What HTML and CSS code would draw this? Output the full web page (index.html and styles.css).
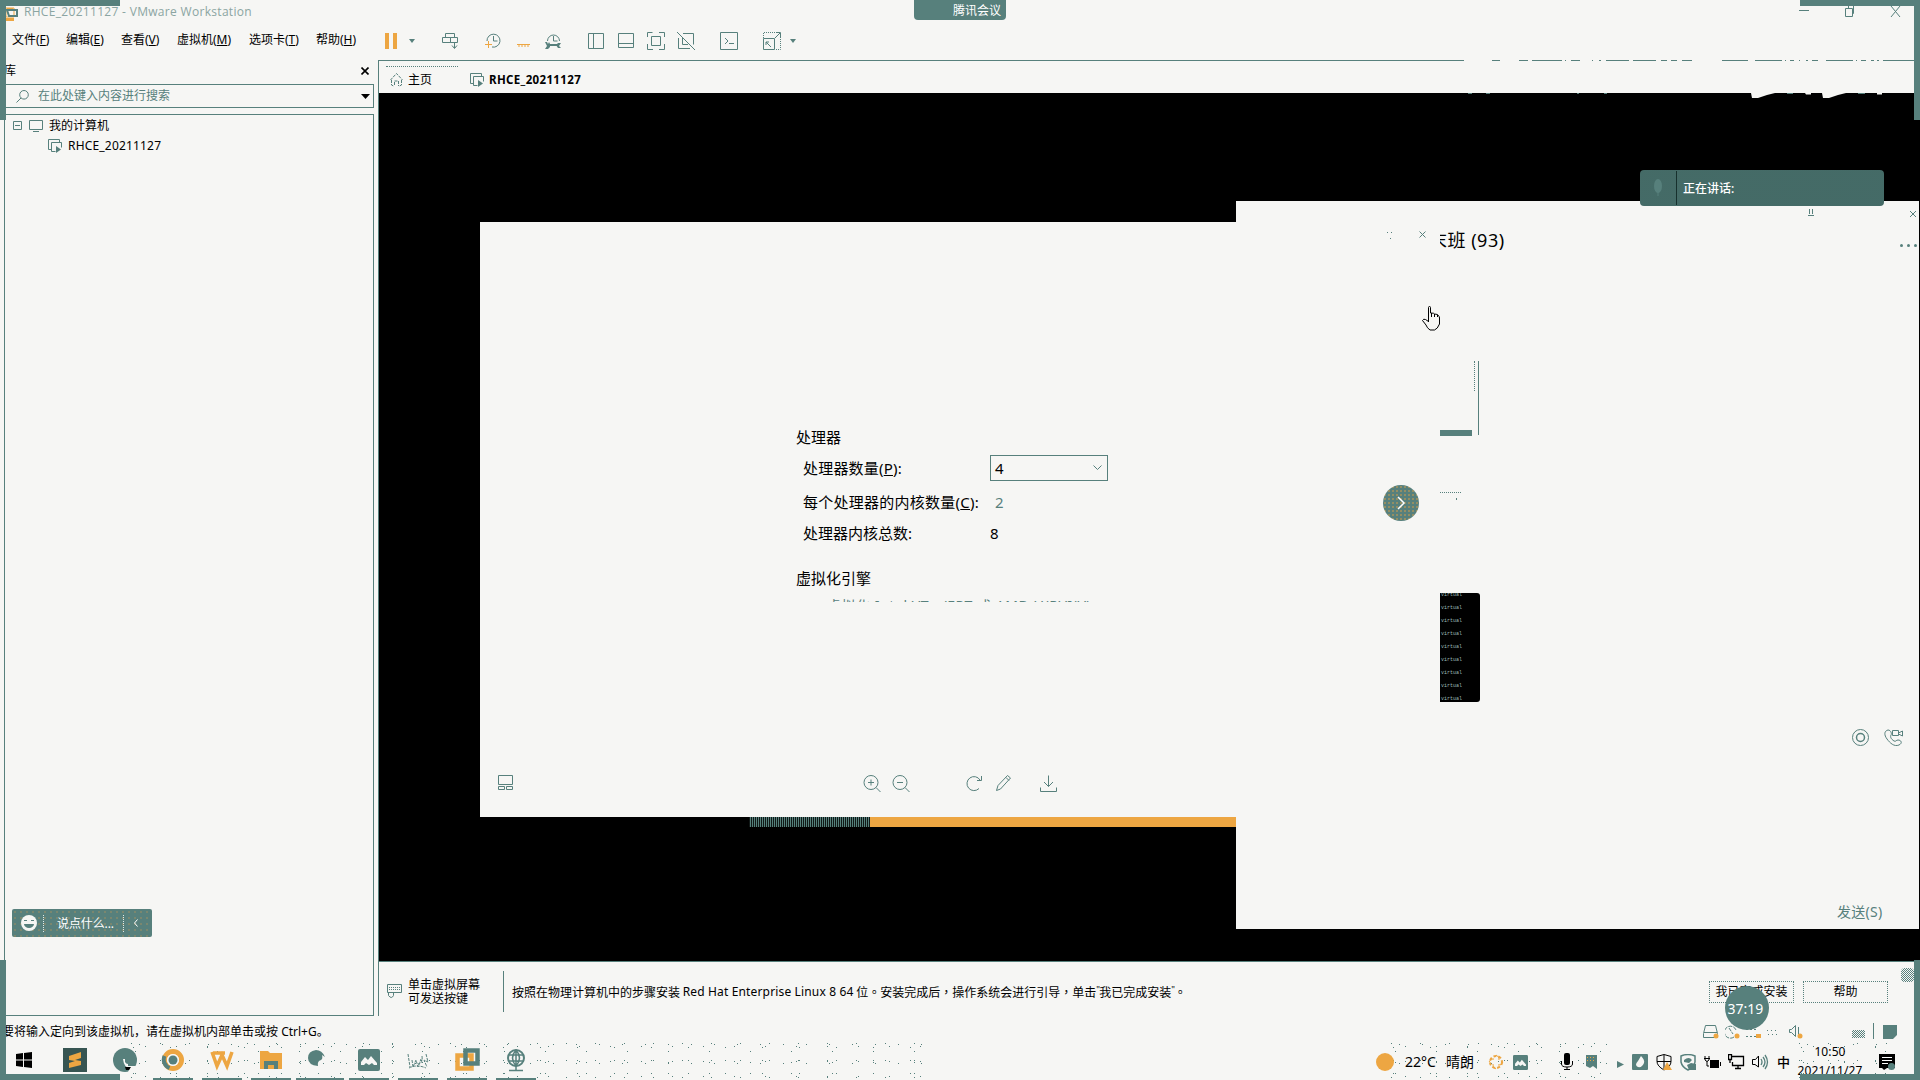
FILE: index.html
```html
<!DOCTYPE html>
<html lang="zh-CN">
<head>
<meta charset="utf-8">
<title>RHCE_20211127 - VMware Workstation</title>
<link rel="stylesheet" href="styles.css">
</head>
<body>
<svg width="0" height="0" class="defs">
  <defs>
    <symbol id="vm" viewBox="0 0 14 14"><path d="M3.500 10.500H.5V.5h11v3M3.500 3.500h10v5M3.500 3.500v9h4"/><path class="f" d="M8 7l5 3.500-5 3.500z"/></symbol>
    <symbol id="caret" viewBox="0 0 6 4"><path class="f" d="M0 0h6L3 4z"/></symbol>
    <symbol id="hill" viewBox="0 0 22 22"><rect class="f" width="22" height="22" rx="2"/><path class="p" d="M3 13l4-5 3 3 3-4 6 7v2h-3l-2-2-3 2-3-2-2 2H3z"/></symbol>
  </defs>
</svg>
<div class="desktop">
  <header class="titlebar">
    <svg class="logo" width="18" height="14" viewBox="0 0 18 14"><path class="o" d="M6 1h8v9H6z"/><path class="o f" d="M6 11h8v3H6zM7 1h6v2H7z"/><path d="M7 3h10v6H9z" stroke-width="2"/></svg>
    <span class="caption">RHCE_20211127 - VMware Workstation</span>
    <svg class="winbtns" width="104" height="16" viewBox="0 0 104 16"><path d="M0 6.500h10M46.500 4.500h7v8h-7zM49.500 4V1.500h5v8H54M92 2l9 11M101 2l-9 11"/></svg>
  </header>

  <div class="menubar">
    <nav class="menus"><span>文件(<u>F</u>)</span><span>编辑(<u>E</u>)</span><span>查看(<u>V</u>)</span><span>虚拟机(<u>M</u>)</span><span>选项卡(<u>T</u>)</span><span>帮助(<u>H</u>)</span></nav>
    <div class="toolbar">
      <svg width="12" height="18"><path class="o f" d="M0 1h4v16H0zM8 1h4v16H8z"/></svg>
      <svg width="6" height="4"><use href="#caret"/></svg>
      <svg width="17" height="18"><path d="M3.500 5.500v-4h9v4M.5 5.500h8v5h-8zM8.500 5.500h7v5h-7zM12.500 11v5M10 13.500l2.500 3 2.500-3"/></svg>
      <svg width="16" height="18"><path d="M2 9a6.500 6.500 0 1 1 5 6M8.500 4v5h4"/><path class="o" d="M0 12.500h7M3.500 9v7"/></svg>
      <svg width="14" height="18"><path class="o" d="M0 12.500h13"/><path class="o" d="M1 14h12" stroke-dasharray="2 1"/></svg>
      <svg width="17" height="18"><path d="M2.500 9a6 6 0 1 1 12 0M8.500 4v5h4"/><path d="M3 13h10" stroke-width="2"/><path class="f" d="M0 10h2l1 2 1-2 1 2v3l-2 2H0l2-3zM16 11h-3l-2 2 2 3h3l-2-2z"/></svg>
      <svg width="17" height="18"><path d="M.5 1.500h15v15H.5zM5.500 1.500v15"/></svg>
      <svg width="17" height="18"><path d="M.5 1.500h15v14H.5zM.5 11.500h15"/></svg>
      <svg width="18" height="18"><path d="M.5 5V.5h5M12 .5h5.500V5M17.500 12v5.500H12M6 17.500H.5V12M4.500 4.500h9v9h-9z"/></svg>
      <svg width="18" height="18"><path d="M0 0l18 18M6 1.500h10.500v11M1.500 6v10.500H13M5.500 6v6.500H11"/></svg>
      <svg width="18" height="18"><path d="M.5.5h17v17H.5zM5 6l3 3-3 3M9 11.500h5"/></svg>
      <svg width="18" height="18"><path stroke-dasharray="1 1" d="M.5 6V.5H17M17.500 1v16.500H12"/><path d="M.5 6.500h11v11H.5zM12 6l5-5M13 .5h4.500V5M3 10l5 5M3 13v-3h3"/></svg>
      <svg width="6" height="4"><use href="#caret"/></svg>
    </div>
  </div>

  <main class="workspace">
    <aside class="library">
      <div class="libhead"><span>库</span><svg width="8" height="8"><path class="k" d="M.5.5l7 7M7.500.5l-7 7" stroke-width="1.600"/></svg></div>
      <div class="search"><svg width="13" height="13"><circle cx="8" cy="4.800" r="4.300"/><path d="M5 8L.5 12.500"/></svg><span>在此处键入内容进行搜索</span><svg width="9" height="5"><path class="k f" d="M0 0h9L4.500 5z"/></svg></div>
      <div class="tree">
        <div class="node"><svg width="31" height="12"><path d="M1.500 1.500h8v8h-8zM3 5.500h5M17.500.5h13v9h-13zM21 11.500h6"/></svg><span>我的计算机</span></div>
        <div class="node child"><svg width="14" height="14"><use href="#vm"/></svg><span>RHCE_20211127</span></div>
        <div class="chat">
          <svg width="16" height="16"><circle class="p" cx="8" cy="8" r="8"/><path class="f" d="M3 9h10a5 4 0 0 1-10 0zM3 5h3v1H3zM10 5h3v1h-3z"/></svg>
          <span>说点什么...</span>
          <svg class="back" width="4" height="8"><path class="w" d="M3.500.5L.5 4l3 3.500"/></svg>
        </div>
      </div>
    </aside>

    <section class="console">
      <svg class="edge" width="1542" height="1"><path d="M0 .5H1085M1113 .5h8M1140 .5h9M1153 .5h30M1186 .5h1M1192 .5h9M1213 .5h1M1220 .5h2M1227 .5h23M1254 .5h23M1282 .5h6M1292 .5h6M1303 .5h10M1343 .5h26M1376 .5h27M1406 .5h1M1411 .5h4M1420 .5h1M1427 .5h2M1433 .5h6M1447 .5h27M1477 .5h1M1482 .5h5M1492 .5h3M1498 .5h2M1504 .5h32"/></svg>
      <div class="tabs">
        <div class="tab home"><svg width="13" height="14"><path stroke-dasharray="3 1" d="M.5 7L6.500.5 12.500 7M1.500 7v5l2 1M11.500 7v5l-2 1M4.500 12V8h4v5"/></svg><span>主页</span></div>
        <div class="tab vmtab"><svg width="14" height="14"><use href="#vm"/></svg><b>RHCE_20211127</b></div>
      </div>
      <div class="screen">
        <svg class="fragments" width="140" height="5"><path class="p" d="M21 0h24l-8 2-9 3h-6zM75 0h6v1.500h-5zM92 0h24l-8 2-9 3h-6zM147 0h5v1.500h-5z"/><path class="f" d="M57 0h6v1h-6zM128 0h7v1h-7zM-262 0h4v1h-4zM-244 0h4v1h-4zM-153 0h2v1h-2zM-126 0h3v1h-3z"/></svg>
        <div class="strip"></div>
        <div class="win group">
          <svg class="pin" width="6" height="8"><path d="M1.500 0v5M4.500 0v5M0 6.500h6"/></svg>
          <svg class="x2" width="6" height="6"><path d="M0 0l6 6M6 0L0 6"/></svg>
          <div class="more"><i></i><i></i><i></i></div>
          <div class="gtitle"><span>末班 (93)</span></div>
          <div class="scroll"></div><div class="bubble"></div><div class="dots"></div>
          <div class="term"><span>virtual</span><span>virtual</span><span>virtual</span><span>virtual</span><span>virtual</span><span>virtual</span><span>virtual</span><span>virtual</span><span>virtual</span></div>
          <svg class="calls" width="52" height="18"><circle cx="8.500" cy="8.500" r="8"/><circle cx="8.500" cy="8.500" r="4" stroke-width="1.500"/><path d="M36 1c-4 1-4 5-1 9s7 8 12 6c4-2 2-5-1-5-2 0-2 2-4 1-3-2-4-4-3-6 1-1 0-5-3-5zM40.500 1.500h6v5h-6zM46.500 4l4-2v5l-4-2"/></svg>
          <span class="send">发送(S)</span>
        </div>
        <div class="win viewer">
          <svg class="vx" width="7" height="7"><path d="M.5.5l6 6M6.500.5l-6 6"/></svg>
          <svg class="vmin" width="6" height="9"><path class="f" d="M0 0h1v1H0zM4 0h1v1H4zM3 6h1v1H3z"/></svg>
          <div class="cpu">
            <h3>处理器</h3>
            <div class="row r1"><label>处理器数量(<u>P</u>):</label><div class="select"><span>4</span><svg width="9" height="6"><path d="M.5.5l4 4 4-4"/></svg></div></div>
            <div class="row r2"><label>每个处理器的内核数量(<u>C</u>):</label><span class="off">2</span></div>
            <div class="row r3"><label>处理器内核总数:</label><span>8</span></div>
            <h3 class="engine">虚拟化引擎</h3>
            <div class="cut">虚拟化 Intel VT-x/EPT 或 AMD-V/RVI(V)</div>
          </div>
          <div class="vtools">
            <svg width="16" height="16"><path d="M.5.5h14v9H.5zM.5 11.500h6v3h-6zM8.500 11.500h6v3h-6z"/></svg>
            <svg width="18" height="18"><circle cx="8" cy="7.500" r="7"/><path d="M5 7.500h6M8 4.500v6M13 12.500l4.500 4.500"/></svg>
            <svg width="18" height="18"><circle cx="8" cy="7.500" r="7"/><path d="M5 7.500h6M13 12.500l4.500 4.500"/></svg>
            <svg width="17" height="17"><path d="M13 13.500A7 7 0 1 1 14 5M15.500 1v4.500H11"/></svg>
            <svg width="16" height="17"><path d="M.5 15.500l1.500-5L11.500.5l3 2.500-10 11zM10 2.500l3 3"/></svg>
            <svg width="18" height="18"><path d="M8.500.5v11M4 7l4.500 4.500L13 7M.5 12.500v4h16v-4"/></svg>
          </div>
          <svg class="hand" width="18" height="25"><path class="k" d="M6.500 16V1.500q0-1 1-1t1 1V7q4 0 4 1 4 0 4 2 1 0 1 2v6q-2 5-5 6H8q-3-2-4-5L.5 14.500q1-2 3-1l3 2M9.500 7v4M12.500 8v3M15.500 9v2"/></svg>
        </div>
        <div class="next"><svg width="9" height="14"><path class="w" d="M1 1l6 6-6 6" stroke-width="1.500"/></svg></div>
        <div class="talk"><svg width="8" height="18"><ellipse class="f" cx="4" cy="7" rx="4" ry="7"/><path d="M4 12v5"/></svg><span>正在讲话:</span></div>
      </div>
      <footer class="hint">
        <svg width="15" height="15"><path d="M.5.5h14v8H.5zM1.500 8.500v3q3 4 5 0v-3"/><path stroke-dasharray="1 1" d="M2 3.500h11M2 5.500h11"/></svg>
        <div class="keys">单击虚拟屏幕<br>可发送按键</div>
        <div class="guide" lang="zh-TW">按照在物理计算机中的步骤安装 <span>Red Hat Enterprise Linux 8 64</span> 位。安装完成后，操作系统会进行引导，单击<span class="q">"</span>我已完成安装<span class="q">"</span>。</div>
        <div class="btn">我已完成安装</div><div class="btn">帮助</div>
        <div class="grip"></div>
      </footer>
    </section>
  </main>

  <div class="status">
    <span>要将输入定向到该虚拟机，请在虚拟机内部单击或按 <em>Ctrl+G</em>。</span>
    <div class="devices">
      <svg width="17" height="15"><path d="M.5 8.500l2-8h10l2 8v4H.5zM1 7.500h13"/><circle class="o f" cx="13" cy="11" r="2.500"/></svg>
      <svg width="16" height="15"><path stroke-dasharray="4 1" d="M9 12A6 6 0 1 1 11 5M4 3l4 6"/><circle class="o f" cx="12" cy="11" r="2.500"/></svg>
      <svg width="16" height="15"><path stroke-dasharray="2 2" d="M0 4.500h12M0 11.500h10"/><path class="o f" d="M10 9h5v4h-5z"/></svg>
      <svg width="16" height="15"><path stroke-dasharray="1 3" d="M0 5.500h12M1 9.500h12"/></svg>
      <svg width="16" height="15"><path d="M.5 4.500h2l4-4v11l-4-4h-2zM9.500 2v8"/><circle class="o f" cx="11" cy="11" r="2.500"/></svg>
      <div class="dither"></div><div class="bar"></div>
      <svg width="15" height="15"><path class="f" d="M0 0h14v10l-4 4H0z"/></svg>
    </div>
  </div>

  <footer class="taskbar">
    <div class="noise n1"></div><div class="noise n2"></div><div class="noise n3"></div>
    <div class="apps">
      <div class="app"><svg width="16" height="16"><path class="k f" d="M0 2l7-1v6.500H0zM8 1l8-1v7.500H8zM0 8.500h7V15l-7-1zM8 8.500h8V16l-8-1z"/></svg></div>
      <div class="app"><svg width="24" height="24"><rect class="mesh" width="24" height="24"/><path class="o f" d="M6 8l12-4v6l-6 2 6 1v4L6 20v-5l6-2-6-1z"/></svg></div>
      <div class="app"><svg width="24" height="24"><circle class="f" cx="12" cy="12" r="12"/><path class="p" d="M10 11h2v3q1 2 3 2v2h9l-3 3-3 3h-3l2-4q-6 0-7-9z"/><path class="k f" d="M12 19h6l-2 3h-3z"/></svg></div>
      <div class="app on"><svg width="24" height="24"><circle class="o" cx="12" cy="12" r="8.500" stroke-width="5"/><path d="M3.500 8a9 9 0 0 0 5 12" stroke-width="4"/><circle class="p" cx="12" cy="12" r="6"/><circle class="f" cx="12" cy="12" r="4.500"/></svg></div>
      <div class="app on"><svg width="24" height="24"><path class="o" d="M2 4l5 14 5-11 5 11 5-14M3 5h12" stroke-width="3.500"/></svg></div>
      <div class="app on"><svg width="24" height="24"><path class="o f" d="M1 3h8l2 2h12v16H1z"/><path class="f" d="M5 13h14v8h-4v-4H9v4H5z"/></svg></div>
      <div class="app on wide"><svg width="24" height="24"><path class="f" d="M0 10q0-7 8-8 6 0 9 7l-3-2q1 4-1 5-4 1-3 6-10-1-10-8z"/></svg></div>
      <div class="app on"><svg width="22" height="22"><use href="#hill"/></svg></div>
      <div class="app on"><svg width="24" height="24"><path d="M2 6l2 13M6 12l1 7 3-7 2 7 3-8M16 8q1 8-4 8M20 6l2 8-4-2 3 7M3 20q8-4 17 0" stroke-dasharray="3 1"/></svg></div>
      <div class="app on"><svg width="25" height="24"><path class="o" d="M2.500 7.500h14v13h-14z" stroke-width="4.500"/><path d="M10.500 2.500h12v13h-12z" stroke-width="4.500"/></svg></div>
      <div class="app on"><svg width="20" height="24"><circle cx="10" cy="10" r="8" stroke-width="2"/><path d="M2 7h16M2 13h16M10 2v16M10 2q-7 8 0 16M10 2q7 8 0 16M10 18v4M3 22.500h14" stroke-width="1.500"/></svg></div>
    </div>
    <div class="tray">
      <svg width="18" height="18"><circle class="o f" cx="9" cy="9" r="9"/></svg>
      <span class="temp">22°C</span><span class="temp">晴朗</span>
      <svg width="17" height="17"><circle class="o" cx="8" cy="8" r="6" stroke-width="2" stroke-dasharray="3 2"/><path class="o" d="M8 1q4 2 3 5M15 8q-2 4-5 3M8 15q-4-2-3-5M1 8q2-4 5-3"/></svg>
      <svg width="15" height="15"><use href="#hill"/></svg>
      <svg width="12" height="18"><rect class="k f" x="3" width="6" height="12" rx="2"/><path class="k" d="M.5 8v3q0 3 5.500 3t5.500-3V8M6 14v3M3 16.500h6"/></svg>
      <svg width="12" height="16"><path class="f" d="M0 1h11v14l-4-3-3 2-4-2z"/><path class="o" d="M1 3.500h9M1 6.500h9" stroke-dasharray="1 2"/></svg>
      <svg class="play" width="7" height="7"><path class="f" d="M0 0l7 3.500L0 7z"/></svg>
      <svg width="16" height="16"><rect class="f" width="16" height="16" rx="1"/><path class="p" d="M9 2q4 4 3 7-2 5-6 4-4-2 0-6z"/></svg>
      <svg width="17" height="17"><path class="k" d="M8 .5l7 2v5q0 5-7 8.500Q1 12 1 7.500v-5zM8 1v15M1 7.500h14"/><path class="o f" d="M11 8l5 8H7z"/></svg>
      <svg width="17" height="17"><path d="M1 2q7-3 14 0v6q-1 6-7 8-6-3-7-8z" stroke-width="1.500"/><path class="f" d="M4 6q5-4 8 0l-3 3-5-1zM7 11l4-2 5 1v6H9z"/></svg>
      <svg width="17" height="15"><path class="k" d="M1 1v4q2 3 4 0V1M0 3.500h6M3 6v5h2"/><path class="k f" d="M6 5h9v8H6zM16 7h1v4h-1z"/></svg>
      <svg width="17" height="16"><path class="k" d="M4 2.500h11.500v9H4.500V8M.5.5h3v5h-3zM2 6v3M10 12v3M7 14.500h6" stroke-width="1.300"/></svg>
      <svg width="17" height="16"><path class="k" d="M.5 5.500h3L6.500 2v11L3 10.500H.5z"/><path d="M9 5q2 3 0 6M11 3q4 5 0 10M13 1q5 7 0 14" stroke-width="1.300"/></svg>
      <span class="ime">中</span>
      <div class="clock"><span>10:50</span><span>2021/11/27</span></div>
      <svg width="17" height="17"><path class="k f" d="M0 0h16v14H8l-3 2-2-2H0z"/><path class="w" d="M3 3.500h10M3 6.500h10M3 9.500h6"/><circle class="f" cx="12.500" cy="12.500" r="3.500"/></svg>
    </div>
  </footer>

  <div class="corner tl"></div><div class="corner tr"></div><div class="corner bl"></div><div class="corner br"></div>
  <div class="meeting">腾讯会议</div>
  <div class="timer">37:19</div>
</div>
</body>
</html>
```
FILE: styles.css
```css
:root { --bg: #f6f6f4; --teal: #57807c; --amber: #eda642; }
* { box-sizing: border-box; }
body { margin: 0; background: var(--bg); color: #000; font: 12px/16px "Noto Sans", "Noto Sans CJK SC", sans-serif; }
svg { display: block; flex: none; fill: none; stroke: var(--teal); stroke-width: 1; }
svg .f { fill: var(--teal); stroke: none; }
svg .o { stroke: var(--amber); }
svg .o.f { fill: var(--amber); stroke: none; }
svg .k { stroke: #000; }
svg .k.f { fill: #000; stroke: none; }
svg .p { fill: var(--bg); stroke: none; }
svg .w { stroke: #fff; }
svg .mesh { fill: #375552; stroke: none; }
.defs { position: absolute; }
u { text-underline-offset: 1px; }

.desktop { position: relative; width: 1920px; height: 1080px; overflow: hidden; display: grid; grid-template-rows: 20px 40px 956px 26px 38px; white-space: nowrap; }

.titlebar { display: flex; align-items: flex-end; padding-right: 18px; }
.logo { align-self: center; margin-top: 7px; }
.caption { margin-left: 6px; color: #8ba5a2; font: 12px/16px "Open Sans", sans-serif; letter-spacing: .31px; }
.winbtns { margin-left: auto; }

.menubar { display: grid; grid-template-columns: 385px 1fr; align-items: center; }
.menus { display: grid; grid-template-columns: 54px 55px 56px 72px 67px 50px; padding-left: 12px; }
.toolbar { display: grid; grid-template-columns: 24px 33px 43px 32px 28px 43px 30px 29px 30px 43px 43px 27px 6px; align-items: center; margin-top: 2px; }

.workspace { display: grid; grid-template-columns: 378px 1fr; }
.library { display: grid; grid-template-rows: 24px 24px 1fr; padding: 0 4px 0 4px; }
.libhead { display: flex; justify-content: space-between; align-items: center; padding: 0 5px 2px 0; }
.search { display: flex; align-items: center; border: 1px solid var(--teal); color: var(--teal); padding: 0 3px 0 11px; }
.search span { margin: 0 auto 0 9px; }
.tree { position: relative; margin-top: 6px; border: 1px solid var(--teal); padding: 1px 0 0 7px; }
.node { display: flex; align-items: center; height: 20px; }
.node span { margin-left: 6px; }
.child { padding-left: 36px; }
.child span { letter-spacing: .18px; }
.chat { position: absolute; left: 7px; bottom: 78px; width: 140px; height: 28px; display: flex; align-items: center; padding-left: 9px; border-radius: 2px; color: #fff; background: radial-gradient(circle, #a08f62 .5px, transparent .9px) 0 0 / 6px 6px, var(--teal); }
.chat span { margin-left: 6px; padding: 1px 9px 0 13px; border: dotted #dfe8e6; border-width: 0 1px; letter-spacing: -.1px; }
.back { margin-left: 10px; }

.console { display: grid; grid-template-rows: 1px 32px 869px 1fr; border-left: 1px solid var(--teal); }
.tabs { display: flex; }
.tab { display: flex; align-items: center; }
.home { width: 72px; margin: 5px 0 0 7px; padding-left: 4px; border-top: 1px dotted var(--teal); }
.home span { margin-left: 5px; }
.vmtab { margin-left: 12px; padding-top: 6px; }
.vmtab b { margin-left: 5px; font-size: 11.500px; letter-spacing: .35px; }
.screen { position: relative; background: #000; border-bottom: 1px solid var(--teal); border-right: 1px solid var(--teal); overflow: hidden; }
.fragments { position: absolute; left: 1351px; top: 0; overflow: visible; }
.win { position: absolute; background: var(--bg); }
.strip { position: absolute; left: 370px; top: 723px; width: 487px; height: 11px; background: linear-gradient(90deg, transparent 121px, var(--amber) 121px), repeating-linear-gradient(90deg, #101817 0 1px, #55807b 1px 2px); }
.group { left: 857px; top: 108px; width: 683px; height: 728px; }
.group > * { position: absolute; }
.pin { left: 572px; top: 8px; }
.x2 { left: 674px; top: 10px; }
.more { left: 664px; top: 43px; display: flex; gap: 4px; }
.more i { width: 3px; height: 3px; border-radius: 2px; background: var(--teal); }
.gtitle { left: 204px; top: 26px; width: 80px; height: 26px; overflow: hidden; font: 18px/26px "Noto Sans", "Noto Sans CJK SC", sans-serif; }
.gtitle span { margin-left: -11px; letter-spacing: .5px; }
.scroll { left: 238px; top: 160px; width: 5px; height: 74px; border-right: 1px solid var(--teal); }
.scroll::before { content: ""; display: block; height: 30px; border-left: 1px dotted var(--teal); }
.bubble { left: 204px; top: 229px; width: 32px; height: 6px; background: var(--teal); }
.dots { left: 204px; top: 291px; width: 21px; border-top: 1px dotted var(--teal); }
.dots::after { content: ""; display: block; width: 1px; height: 2px; margin: 5px 0 0 16px; background: var(--teal); }
.term { left: 204px; top: 392px; width: 40px; height: 109px; background: #000; border-radius: 0 3px 3px 0; color: #9dbbb7; font: 5px/13px "Liberation Mono", monospace; display: flex; flex-direction: column; padding-left: 1px; overflow: hidden; }
.term span { flex: none; height: 13px; position: relative; top: -4px; }
.calls { left: 616px; top: 528px; }
.send { left: 601px; top: 700px; color: var(--teal); font-size: 14px; line-height: 22px; letter-spacing: .3px; }
.viewer { left: 101px; top: 129px; width: 960px; height: 595px; }
.vx { position: absolute; left: 939px; top: 9px; }
.vmin { position: absolute; left: 907px; top: 10px; }
.hand { position: absolute; left: 942px; top: 84px; }
.cpu { position: absolute; left: 316px; top: 203px; width: 340px; font-size: 15px; line-height: 24px; }
.cpu h3 { margin: 0; font: inherit; }
.row { display: grid; grid-template-columns: 187px 118px; align-items: center; height: 26px; margin-left: 7px; }
.r1 { margin-top: 6px; } .r2 { margin-top: 8px; } .r3 { margin-top: 5px; }
.r1 label { letter-spacing: .2px; }
.r2 label { letter-spacing: .25px; }
.select { display: flex; align-items: center; justify-content: space-between; height: 26px; padding: 0 5px 0 4px; border: 1px solid var(--teal); }
.off { color: var(--teal); padding-left: 5px; }
.cpu .engine { margin-top: 20px; }
.cut { height: 4px; margin: 8px 0 0 31px; overflow: hidden; color: var(--teal); line-height: 15px; width: 264px; font-size: 14px; letter-spacing: .55px; }
.vtools { position: absolute; left: 18px; top: 553px; display: grid; grid-template-columns: 365px 29px 74px 30px 44px 18px; align-items: start; }
.next { position: absolute; left: 1004px; top: 392px; width: 36px; height: 36px; border-radius: 50%; display: grid; place-items: center; background: radial-gradient(circle, #a9945c .6px, transparent 1px) 0 0 / 4px 4px, var(--teal); }
.talk { position: absolute; left: 1261px; top: 77px; width: 244px; height: 36px; border-radius: 4px; display: flex; align-items: center; padding-left: 14px; color: #fff; font-weight: 500; background: radial-gradient(circle, #2c4a47 .5px, transparent .8px) 0 0 / 2px 2px, #4f7975; }
.talk span { margin-left: 14px; padding: 10px 0 8px 6px; border-left: 1px solid #17302d; }

.hint { display: flex; align-items: center; height: 54px; padding: 5px 0 0 8px; position: relative; }
.keys { margin-left: 6px; line-height: 14px; padding-top: 1px; }
.guide { display: flex; align-items: center; height: 41px; margin-left: 23px; padding-left: 8px; border-left: 1px solid var(--teal); font-family: "Noto Sans CJK TC", sans-serif; white-space: pre; }
.guide span { font-family: "Noto Sans", sans-serif; letter-spacing: .15px; }
.guide .q { width: 3px; letter-spacing: 0; font-size: 9px; padding-bottom: 3px; }
.btn { width: 85px; height: 22px; border: 1px dotted var(--teal); display: grid; place-items: center; margin-left: 9px; }
.guide + .btn { margin-left: auto; }
.btn + .grip { margin: 0 7px 0 13px; width: 13px; height: 14px; align-self: flex-start; margin-top: 1px; border-radius: 4px; background: repeating-conic-gradient(var(--teal) 0 25%, var(--bg) 0 50%) 0 0 / 2px 2px; }

.status { display: flex; justify-content: space-between; padding: 8px 24px 0 2px; }
.status em { font-style: normal; }
.devices { display: grid; grid-template-columns: 22px 21px 21px 22px 30px 54px 10px 14px; margin-top: 1px; }
.dither { width: 13px; height: 8px; margin: 5px 0 0 33px; background: repeating-conic-gradient(var(--teal) 0 25%, var(--bg) 0 50%) 0 0 / 2px 2px; }
.devices .bar { width: 1px; height: 16px; margin-top: -2px; background: var(--teal); }

.taskbar { position: relative; display: flex; justify-content: space-between; }
.noise { position: absolute; top: 0; height: 38px; background: radial-gradient(circle at 1.500px 1.500px, var(--teal) .7px, transparent .8px) 0 0 / 29px 17px, radial-gradient(circle at 3.500px 5.500px, var(--teal) .7px, transparent .8px) 0 0 / 37px 13px, radial-gradient(circle at 9.500px 2.500px, var(--teal) .7px, transparent .8px) 0 0 / 23px 19px, radial-gradient(circle at 5.500px 9.500px, var(--teal) .7px, transparent .8px) 0 0 / 41px 11px, radial-gradient(circle at 15.500px 4.500px, var(--teal) .7px, transparent .8px) 0 0 / 31px 15px; }
.n1 { left: 130px; width: 800px; }
.n2 { left: 1390px; width: 220px; }
.n3 { left: 1798px; width: 100px; }
.apps { position: relative; display: grid; grid-template-columns: 48px 54px 46px 50px 48px 50px 48px 50px 48px 50px 48px; }
.app { position: relative; display: flex; align-items: center; justify-content: center; padding-bottom: 2px; }
.app.on::after { content: ""; position: absolute; bottom: 0; left: 50%; width: 40px; height: 2px; margin-left: -20px; background: var(--teal); }
.app.wide::after { width: 48px; margin-left: -24px; }
.tray { position: relative; display: grid; grid-template-columns: 29px 41px 42px 25px 48px 25px 31px 15px 24px 24px 24px 24px 24px 25px 20px 82px 17px; align-items: center; margin-right: 25px; padding-bottom: 1px; }
.temp { font-size: 14px; }
.ime { font-size: 13px; font-weight: 500; }
.play { margin-top: 5px; }
.clock { width: 66px; display: flex; flex-direction: column; align-items: center; line-height: 19px; letter-spacing: .1px; padding-bottom: 2px; }

.corner { position: absolute; width: 120px; height: 120px; border: 0 solid var(--teal); }
.tl { left: 0; top: 0; border-width: 6px 0 0 6px; }
.tr { right: 0; top: 0; border-width: 6px 6px 0 0; }
.bl { left: 0; bottom: 0; border-width: 0 0 6px 6px; }
.br { right: 0; bottom: 0; border-width: 0 6px 6px 0; }
.meeting { position: absolute; left: 914px; top: 0; width: 92px; height: 20px; padding-left: 39px; border-radius: 0 0 4px 4px; background: var(--teal); color: #fff; line-height: 21px; }
.timer { position: absolute; left: 1725px; top: 986px; width: 44px; height: 44px; border-radius: 50%; background: var(--teal); color: #fff; font-size: 14px; line-height: 46px; text-align: center; text-indent: -3px; }
```
